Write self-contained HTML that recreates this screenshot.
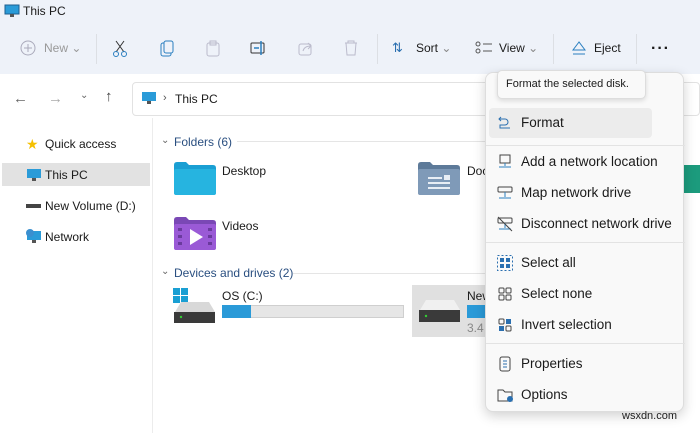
<!DOCTYPE html>
<html><head><style>
*{margin:0;padding:0;box-sizing:border-box}
body{width:700px;height:433px;overflow:hidden;background:#fff;font-family:"Liberation Sans",sans-serif;font-size:12px;color:#1a1a1a;position:relative}
.a{position:absolute}
.top{left:0;top:0;width:700px;height:74px;background:#eef2f9}
.t{white-space:nowrap}
.sep{width:1px;background:#dcdfe4}
.mi{position:absolute;left:8px;width:184px;height:30px;font-size:13.5px}
.mi span{position:absolute;left:32px;top:7px}
.mi svg{position:absolute;left:10px;top:7px}
.hr{position:absolute;left:0;width:199px;height:1px;background:#e3e3e3}
</style></head><body>
<div class="a top"></div>
<svg class="a" style="left:4px;top:4px" width="16" height="14"><rect x="1" y="1" width="14" height="9" fill="#2a9bd8" stroke="#1c5f90"/><rect x="6" y="10" width="4" height="3" fill="#555"/></svg>
<div class="a t" style="left:23px;top:4px;font-size:12px">This PC</div>
<svg class="a" style="left:20px;top:40px" width="16" height="16"><circle cx="8" cy="8" r="7" fill="none" stroke="#aab"/><path d="M8 4v8M4 8h8" stroke="#aab"/></svg>
<div class="a t" style="left:44px;top:41px;color:#999;font-size:12px">New ⌄</div>
<div class="a sep" style="left:96px;top:34px;height:30px"></div>
<svg class="a" style="left:112px;top:40px" width="16" height="18"><path d="M4 1l8 11M12 1L4 12" stroke="#333" fill="none"/><circle cx="4" cy="14" r="2.5" fill="none" stroke="#2a7fc0"/><circle cx="12" cy="14" r="2.5" fill="none" stroke="#2a7fc0"/></svg>
<svg class="a" style="left:160px;top:40px" width="14" height="17"><rect x="1" y="3" width="10" height="13" rx="2" fill="none" stroke="#2a7fc0"/><rect x="4" y="1" width="9" height="12" rx="2" fill="#eef2f9" stroke="#2a7fc0"/></svg>
<svg class="a" style="left:206px;top:40px" width="14" height="17"><rect x="1" y="3" width="12" height="13" rx="2" fill="none" stroke="#bbc"/><rect x="4" y="1" width="6" height="4" fill="none" stroke="#bbc"/></svg>
<svg class="a" style="left:250px;top:40px" width="18" height="16"><rect x="1" y="3" width="13" height="10" rx="1" fill="none" stroke="#333"/><path d="M11 1v14M4 8h5" stroke="#2a7fc0" stroke-width="1.5"/></svg>
<svg class="a" style="left:298px;top:40px" width="16" height="16"><rect x="1" y="4" width="12" height="11" rx="2" fill="none" stroke="#bbc"/><path d="M5 11c1-4 4-5 8-5M10 3l3 3-3 3" fill="none" stroke="#bbc"/></svg>
<svg class="a" style="left:344px;top:40px" width="14" height="16"><path d="M1 3h12M4 3V1h6v2M2 3l1 12h8l1-12" fill="none" stroke="#bbc"/></svg>
<div class="a sep" style="left:377px;top:34px;height:30px"></div>
<div class="a t" style="left:392px;top:40px;font-size:13px;color:#2a6fb0">⇅</div>
<div class="a t" style="left:416px;top:41px">Sort <span style="color:#888">⌄</span></div>
<svg class="a" style="left:475px;top:41px" width="18" height="14"><circle cx="3" cy="3" r="2" fill="none" stroke="#555"/><circle cx="3" cy="10" r="2" fill="none" stroke="#555"/><path d="M8 3h9M8 10h9" stroke="#555"/></svg>
<div class="a t" style="left:499px;top:41px">View <span style="color:#888">⌄</span></div>
<div class="a sep" style="left:553px;top:34px;height:30px"></div>
<svg class="a" style="left:571px;top:40px" width="16" height="16"><path d="M8 2L2 10h12z" fill="none" stroke="#2a7fc0"/><path d="M2 14h12" stroke="#2a7fc0"/></svg>
<div class="a t" style="left:594px;top:41px">Eject</div>
<div class="a sep" style="left:636px;top:34px;height:30px"></div>
<div class="a t" style="left:651px;top:40px;font-size:16px;font-weight:bold;letter-spacing:1px">···</div>
<div class="a t" style="left:13px;top:90px;font-size:15px;color:#666">←</div>
<div class="a t" style="left:48px;top:90px;font-size:15px;color:#aaa">→</div>
<div class="a t" style="left:80px;top:90px;font-size:10px;color:#666">⌄</div>
<div class="a t" style="left:105px;top:88px;font-size:15px;color:#444">↑</div>
<div class="a" style="left:132px;top:82px;width:568px;height:34px;border:1px solid #e2e2e2;border-radius:4px"></div>
<svg class="a" style="left:141px;top:91px" width="16" height="14"><rect x="1" y="1" width="14" height="9" fill="#2a9bd8"/><rect x="6" y="10" width="4" height="3" fill="#555"/></svg>
<div class="a t" style="left:163px;top:92px;font-size:11px;color:#555">›</div>
<div class="a t" style="left:175px;top:92px">This PC</div>
<div class="a" style="left:152px;top:118px;width:1px;height:315px;background:#ececec"></div>
<div class="a t" style="left:26px;top:136px;font-size:14px;color:#f5c000">★</div>
<div class="a t" style="left:45px;top:137px">Quick access</div>
<div class="a" style="left:2px;top:163px;width:148px;height:23px;background:#e2e2e2"></div>
<svg class="a" style="left:26px;top:168px" width="16" height="14"><rect x="1" y="1" width="14" height="9" fill="#2a9bd8"/><rect x="6" y="10" width="4" height="3" fill="#555"/></svg>
<div class="a t" style="left:45px;top:168px">This PC</div>
<div class="a" style="left:26px;top:204px;width:15px;height:4px;background:#444"></div>
<div class="a t" style="left:45px;top:199px">New Volume (D:)</div>
<svg class="a" style="left:24px;top:228px" width="18" height="16"><rect x="3" y="3" width="14" height="9" fill="#2a9bd8"/><circle cx="6" cy="5" r="4" fill="#3a8fcf"/><rect x="8" y="12" width="4" height="3" fill="#555"/></svg>
<div class="a t" style="left:45px;top:230px">Network</div>
<div class="a t" style="left:161px;top:135px;color:#666;font-size:10px">⌄</div>
<div class="a t" style="left:174px;top:135px;color:#2a4f80;font-size:12px">Folders (6)</div>
<div class="a" style="left:237px;top:141px;width:250px;height:1px;background:#e5e5e5"></div>
<svg class="a" style="left:174px;top:162px" width="42" height="33"><path d="M0 3q0-3 3-3h9l3 3h24q3 0 3 3v24q0 3-3 3H3q-3 0-3-3z" fill="#1a9fd3"/><rect x="0" y="7" width="42" height="26" rx="2" fill="#26b4e0"/></svg>
<div class="a t" style="left:222px;top:164px">Desktop</div>
<svg class="a" style="left:418px;top:162px" width="42" height="33"><path d="M0 3q0-3 3-3h9l3 3h24q3 0 3 3v24q0 3-3 3H3q-3 0-3-3z" fill="#5d7a99"/><rect x="0" y="7" width="42" height="26" rx="2" fill="#7f9ab8"/><path d="M10 16h14M10 21h22M10 26h22" stroke="#e8eef5" stroke-width="2"/><rect x="26" y="13" width="6" height="5" fill="#e8eef5"/></svg>
<div class="a t" style="left:467px;top:164px">Doc</div>
<div class="a" style="left:680px;top:165px;width:20px;height:28px;background:#1c9b7d"></div>
<svg class="a" style="left:174px;top:217px" width="42" height="33"><path d="M0 3q0-3 3-3h9l3 3h24q3 0 3 3v24q0 3-3 3H3q-3 0-3-3z" fill="#7a48b5"/><rect x="0" y="7" width="42" height="26" rx="2" fill="#9a5ad6"/><path d="M16 12v16l13-8z" fill="#fff"/><g fill="#6a3a9e"><rect x="4" y="11" width="4" height="3"/><rect x="4" y="18" width="4" height="3"/><rect x="4" y="25" width="4" height="3"/><rect x="34" y="11" width="4" height="3"/><rect x="34" y="18" width="4" height="3"/><rect x="34" y="25" width="4" height="3"/></g></svg>
<div class="a t" style="left:222px;top:219px">Videos</div>
<div class="a t" style="left:161px;top:266px;color:#666;font-size:10px">⌄</div>
<div class="a t" style="left:174px;top:266px;color:#2a4f80">Devices and drives (2)</div>
<div class="a" style="left:293px;top:273px;width:194px;height:1px;background:#e5e5e5"></div>
<svg class="a" style="left:173px;top:288px" width="44" height="36"><g fill="#1a9fd3"><rect x="0" y="0" width="7" height="7"/><rect x="8" y="0" width="7" height="7"/><rect x="0" y="8" width="7" height="7"/><rect x="8" y="8" width="7" height="7"/></g><path d="M2 24l6-10h28l6 10z" fill="#d8d8d8"/><rect x="1" y="24" width="41" height="11" fill="#3a3a3a"/><circle cx="8" cy="29" r="1.2" fill="#3c3"/></svg>
<div class="a t" style="left:222px;top:289px">OS (C:)</div>
<div class="a" style="left:222px;top:305px;width:182px;height:13px;background:#e6e6e6;border:1px solid #cfcfcf"></div>
<div class="a" style="left:222px;top:305px;width:29px;height:13px;background:#2a9ad8"></div>
<div class="a" style="left:412px;top:285px;width:90px;height:52px;background:#e0e0e0"></div>
<svg class="a" style="left:418px;top:300px" width="44" height="24"><path d="M2 10l6-10h28l6 10z" fill="#f0f0f0"/><rect x="1" y="10" width="41" height="12" fill="#3a3a3a"/><circle cx="8" cy="16" r="1.2" fill="#3c3"/></svg>
<div class="a t" style="left:467px;top:289px">New</div>
<div class="a" style="left:467px;top:305px;width:20px;height:13px;background:#2a9ad8"></div>
<div class="a t" style="left:467px;top:321px;color:#888">3.4</div>
<div class="a" style="left:485px;top:72px;width:199px;height:340px;background:#f9f9f9;border:1px solid #ddd;border-radius:8px;box-shadow:0 4px 12px rgba(0,0,0,.18)">
  <div class="mi" style="top:35px;background:#ececec;border-radius:4px;left:3px;width:163px"></div>
  <div class="mi" style="top:35px;left:3px"><svg width="16" height="16" style="left:8px"><path d="M4 2L2 4l2 2M2 4h6a3 3 0 010 6H3v3h10" fill="none" stroke="#2a6fb0"/></svg><span>Format</span></div>
  <div class="hr" style="top:72px"></div>
  <div class="mi" style="top:74px;left:3px"><svg width="16" height="16" style="left:8px"><rect x="3" y="1" width="10" height="8" fill="none" stroke="#444"/><path d="M8 9v3M2 13h12" stroke="#2a7fc0"/></svg><span>Add a network location</span></div>
  <div class="mi" style="top:105px;left:3px"><svg width="16" height="16" style="left:8px"><rect x="1" y="2" width="14" height="5" rx="1" fill="none" stroke="#444"/><path d="M8 7v5M2 13h12" stroke="#2a7fc0"/></svg><span>Map network drive</span></div>
  <div class="mi" style="top:136px;left:3px"><svg width="16" height="16" style="left:8px"><rect x="1" y="2" width="14" height="5" rx="1" fill="none" stroke="#444"/><path d="M8 7v5M2 13h12" stroke="#2a7fc0"/><path d="M1 1l14 14" stroke="#444"/></svg><span>Disconnect network drive</span></div>
  <div class="hr" style="top:169px"></div>
  <div class="mi" style="top:175px;left:3px"><svg width="16" height="16" style="left:8px"><rect x="0.5" y="0.5" width="15" height="15" fill="none" stroke="#2a6fb0" stroke-dasharray="2 2"/><g fill="#2a6fb0"><rect x="3" y="3" width="4" height="4"/><rect x="9" y="3" width="4" height="4"/><rect x="3" y="9" width="4" height="4"/><rect x="9" y="9" width="4" height="4"/></g></svg><span>Select all</span></div>
  <div class="mi" style="top:206px;left:3px"><svg width="16" height="16" style="left:8px"><g fill="none" stroke="#444"><rect x="2" y="2" width="5" height="5" rx="1"/><rect x="9" y="2" width="5" height="5" rx="1"/><rect x="2" y="9" width="5" height="5" rx="1"/><rect x="9" y="9" width="5" height="5" rx="1"/></g></svg><span>Select none</span></div>
  <div class="mi" style="top:237px;left:3px"><svg width="16" height="16" style="left:8px"><g fill="#2a6fb0"><rect x="9" y="2" width="5" height="5"/><rect x="2" y="9" width="5" height="5"/></g><g fill="none" stroke="#444"><rect x="2" y="2" width="5" height="5" rx="1"/><rect x="9" y="9" width="5" height="5" rx="1"/></g></svg><span>Invert selection</span></div>
  <div class="hr" style="top:270px"></div>
  <div class="mi" style="top:276px;left:3px"><svg width="16" height="16" style="left:8px"><rect x="3" y="1" width="10" height="14" rx="2" fill="none" stroke="#444"/><path d="M6 5h4M6 8h4M6 11h4" stroke="#2a6fb0"/></svg><span>Properties</span></div>
  <div class="mi" style="top:307px;left:3px"><svg width="18" height="16" style="left:8px"><path d="M1 3h5l2 2h7v9H1z" fill="none" stroke="#444"/><circle cx="13" cy="12" r="3" fill="#2a6fb0"/></svg><span>Options</span></div>
</div>
<div class="a t" style="left:497px;top:70px;width:149px;height:29px;background:#f9f9f9;border:1px solid #ddd;border-radius:5px;box-shadow:0 2px 5px rgba(0,0,0,.12);padding:7px 0 0 8px;font-size:11px">Format the selected disk.</div>
<div class="a t" style="left:622px;top:410px;font-size:11px;color:#222">wsxdn.com</div>
</body></html>
